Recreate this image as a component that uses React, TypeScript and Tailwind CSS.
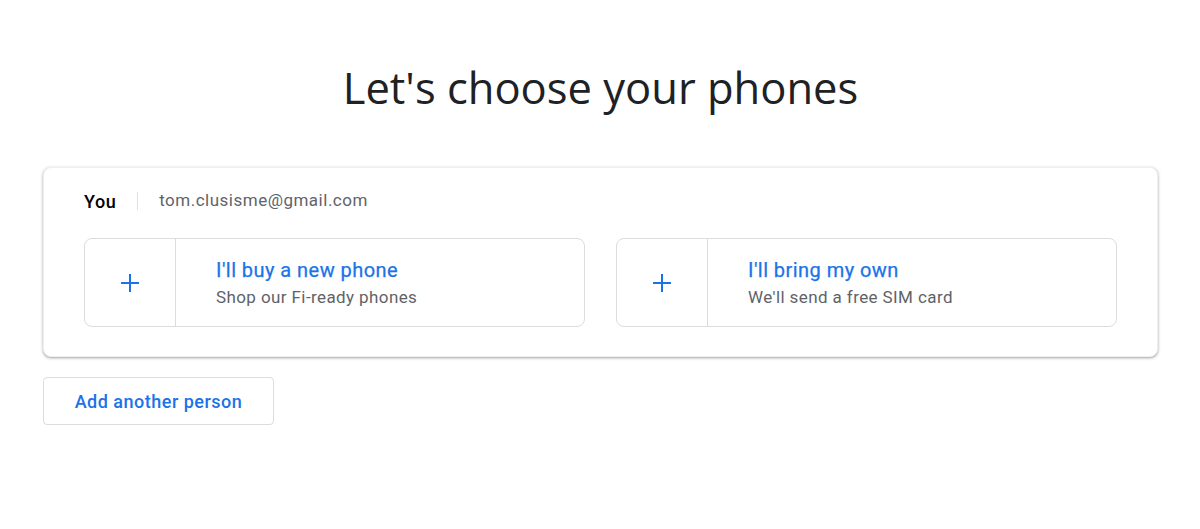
const options = [
  { title: "I'll buy a new phone", sub: "Shop our Fi-ready phones" },
  { title: "I'll bring my own", sub: "We'll send a free SIM card" },
];

function PlusIcon() {
  return (
    <svg width="20" height="20" viewBox="0 0 20 20" className="text-[#1a73e8]">
      <path d="M10 1v18M1 10h18" stroke="currentColor" strokeWidth="2" fill="none" />
    </svg>
  );
}

export default function App() {
  return (
    <div className="min-h-[529px] bg-white pl-[43px] pr-[42px] font-['Roboto',sans-serif]">
      <h1 className="pt-[60px] text-center font-['Open_Sans',sans-serif] text-[43.5px] leading-[56px] text-[#202124]">
        Let's choose your phones
      </h1>

      {/* Person card */}
      <div className="mt-[51px] rounded-lg border border-[#efefef] bg-white px-[40px] pt-[20px] pb-[29px] shadow-[0_1px_2px_rgba(60,64,67,0.3),0_1px_3px_1px_rgba(60,64,67,0.15)]">
        <div className="flex items-center h-[26px]">
          <span className="text-[18px] font-medium tracking-[0.5px] text-[#000]">You</span>
          <span className="mx-[21px] h-[18px] w-px bg-[#e0e0e0]" />
          <span className="text-[17px] tracking-[0.5px] text-[#5f6368]">tom.clusisme@gmail.com</span>
        </div>

        <div className="mt-[24px] grid grid-cols-2 gap-[31px]">
          {options.map((o) => (
            <button
              key={o.title}
              className="flex h-[89px] items-stretch rounded-lg border border-[#dadce0] bg-white text-left"
            >
              <div className="flex w-[91px] items-center justify-center border-r border-[#dadce0]">
                <PlusIcon />
              </div>
              <div className="flex flex-col justify-center pl-[40px] pt-[2px]">
                <span className="text-[20px] leading-[27px] tracking-[0.45px] text-[#1a73e8] [-webkit-text-stroke:0.25px_#1a73e8]">{o.title}</span>
                <span className="text-[17px] leading-[26px] tracking-[0.4px] text-[#5f6368]">{o.sub}</span>
              </div>
            </button>
          ))}
        </div>
      </div>

      <button className="mt-[20px] h-[48px] w-[231px] rounded border border-[#dadce0] bg-white text-[18px] font-medium tracking-[0.5px] text-[#1a73e8]">
        Add another person
      </button>
    </div>
  );
}
